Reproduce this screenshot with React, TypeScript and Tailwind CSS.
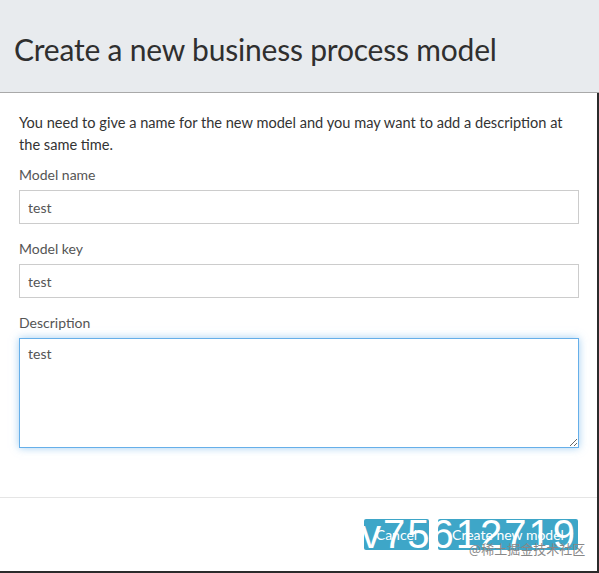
export default function App() {
  return (
    <div className="w-[599px] h-[573px] bg-white font-['Lato','Noto_Sans',sans-serif] text-[#333] relative overflow-hidden">
      {/* Header */}
      <div className="h-[93px] bg-[#e8ebee] border-b border-[#a9a9a9] pl-[14px] pt-[34px]">
        <h1 className="text-[30px] leading-none font-normal tracking-[-0.2px] text-[#2f2f2f]">Create a new business process model</h1>
      </div>

      {/* Body */}
      <div className="h-[480px] border-r-2 border-b-2 border-[#2b2b2b] flex flex-col">
        <div className="px-[19px] pt-[19px] h-[405px] border-b border-[#e5e5e5]">
          <p className="text-[14.6px] leading-[22px] text-[#333]">
            You need to give a name for the new model and you may want to add a description at the same time.
          </p>
          <div className="mt-[9px] flex flex-col">
            <label className="text-[14px] leading-[20px] text-[#555]">Model name</label>
            <input
              readOnly
              value="test"
              className="mt-[5px] h-[34px] w-[560px] border border-[#ccc] px-[8px] text-[14px] text-[#555] outline-none"
            />
            <label className="mt-[15px] text-[14px] leading-[20px] text-[#555]">Model key</label>
            <input
              readOnly
              value="test"
              className="mt-[5px] h-[34px] w-[560px] border border-[#ccc] px-[8px] text-[14px] text-[#555] outline-none"
            />
            <label className="mt-[15px] text-[14px] leading-[20px] text-[#555]">Description</label>
            <textarea
              readOnly
              value="test"
              className="mt-[5px] h-[110px] w-[560px] border border-[#66afe9] px-[8px] py-[4px] text-[14px] text-[#555] outline-none shadow-[0_0_8px_rgba(102,175,233,0.6)]"
            />
          </div>
        </div>
        <div className="flex-1 flex items-center justify-end gap-[9px] pr-[19px]">
          <button className="h-[31px] w-[65px] rounded-[2px] bg-[#3ea6c8] text-white text-[14px]">Cancel</button>
          <button className="h-[31px] w-[140px] rounded-[2px] bg-[#3ea6c8] text-white text-[14px]">Create new model</button>
        </div>
      </div>

      {/* Watermark */}
      <div className="absolute left-[361px] top-[514px] text-white text-[40px] leading-none tracking-[2px] font-['Liberation_Sans',sans-serif] pointer-events-none">
        v75612719
      </div>
      <div className="absolute left-[469px] top-[542px] text-[#888] text-[13px] leading-none font-['Noto_Sans_CJK_SC',sans-serif] pointer-events-none">
        @稀土掘金技术社区
      </div>
    </div>
  );
}
